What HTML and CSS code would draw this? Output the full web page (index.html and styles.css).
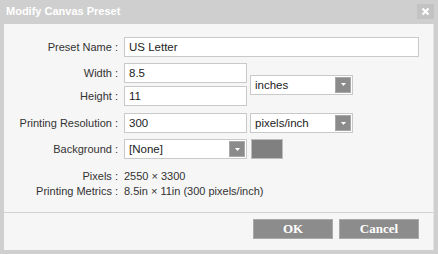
FILE: index.html
```html
<!DOCTYPE html>
<html>
<head>
<meta charset="utf-8">
<link rel="stylesheet" href="styles.css">
</head>
<body>
<div class="dialog">
  <div class="titlebar">
    <span class="title">Modify Canvas Preset</span>
    <span class="close"><svg width="9" height="9" viewBox="0 0 9 9"><path d="M1.5 1.5 L7.5 7.5 M7.5 1.5 L1.5 7.5" stroke="#fff" stroke-width="2.2" fill="none"/></svg></span>
  </div>
  <div class="panel">
    <div class="form">
      <label class="lbl r1">Preset Name :</label>
      <div class="input wide r1">US Letter</div>

      <label class="lbl r2">Width :</label>
      <div class="input c2 r2">8.5</div>

      <label class="lbl r3">Height :</label>
      <div class="input c2 r3">11</div>

      <div class="select units">inches<span class="dd"><svg width="5" height="3" viewBox="0 0 5 3"><path d="M0 0 H5 L2.5 3 Z" fill="#fff"/></svg></span></div>

      <label class="lbl r4">Printing Resolution :</label>
      <div class="input c2 r4">300</div>
      <div class="select c3 r4">pixels/inch<span class="dd"><svg width="5" height="3" viewBox="0 0 5 3"><path d="M0 0 H5 L2.5 3 Z" fill="#fff"/></svg></span></div>

      <label class="lbl r5">Background :</label>
      <div class="select bgsel c2 r5">[None]<span class="dd"><svg width="5" height="3" viewBox="0 0 5 3"><path d="M0 0 H5 L2.5 3 Z" fill="#fff"/></svg></span></div>
      <div class="swatch c3 r5"></div>
    </div>
    <div class="info">
      <span class="ilbl">Pixels :</span><span class="ival">2550 × 3300</span>
      <span class="ilbl">Printing Metrics :</span><span class="ival">8.5in × 11in (300 pixels/inch)</span>
    </div>
    <div class="footer">
      <button class="btn">OK</button>
      <button class="btn">Cancel</button>
    </div>
  </div>
</div>
</body>
</html>
```
FILE: styles.css
```css
html, body {
  margin: 0;
  padding: 0;
  background: #cfcfcf;
}
body {
  width: 438px;
  height: 254px;
  overflow: hidden;
  font-family: "Liberation Sans", Arial, sans-serif;
  font-size: 11px;
  color: #333;
}
.dialog {
  display: flex;
  flex-direction: column;
  height: 254px;
}
.titlebar {
  height: 24px;
  display: flex;
  justify-content: space-between;
  align-items: flex-start;
  padding: 0 4px 0 6px;
}
.title {
  color: #fff;
  font-weight: bold;
  font-size: 11px;
  line-height: 23px;
}
.close {
  margin-top: 4px;
  width: 17px;
  height: 15px;
  background: #c3c3c3;
  display: flex;
  align-items: center;
  justify-content: center;
}
.panel {
  margin: 0 4px;
  height: 226px;
  background: #f6f6f6;
  display: flex;
  flex-direction: column;
  box-sizing: border-box;
  border-right: 1px solid #e4e4e4;
}
.form {
  display: grid;
  grid-template-columns: 120px 126px 1fr;
  grid-template-rows: 20px 6px 20px 3px 20px 7px 20px 6px 20px;
  padding: 13px 14px 0 0;
}
.lbl {
  grid-column: 1;
  text-align: right;
  padding-right: 6px;
  align-self: center;
  color: #333;
  line-height: 14px;
}
.r1 { grid-row: 1; }
.r2 { grid-row: 3; }
.r3 { grid-row: 5; }
.r4 { grid-row: 7; }
.r5 { grid-row: 9; }
.c2 { grid-column: 2; }
.c3 { grid-column: 3; }
.input {
  box-sizing: border-box;
  height: 20px;
  width: 123px;
  background: #fff;
  border: 1px solid #c9c9c9;
  padding: 0 4px;
  line-height: 18px;
  color: #222;
  font-size: 11.5px;
}
.input.wide {
  grid-column: 2 / 4;
  width: auto;
}
.select {
  box-sizing: border-box;
  height: 20px;
  width: 103px;
  background: #fff;
  border: 1px solid #c9c9c9;
  padding: 0 0 0 4px;
  line-height: 18px;
  color: #222;
  font-size: 11.5px;
  display: flex;
  justify-content: space-between;
  align-items: center;
}
.select.units {
  grid-column: 3;
  grid-row: 3 / 6;
  align-self: center;
}
.select.bgsel {
  width: 123px;
}
.dd {
  box-sizing: border-box;
  width: 16px;
  height: 16px;
  margin-right: 1px;
  background: #8b8b8b;
  border: 1px solid #a8a8a8;
  display: flex;
  align-items: center;
  justify-content: center;
}
.swatch {
  box-sizing: border-box;
  width: 32px;
  height: 20px;
  margin-left: 1px;
  background: #808080;
  border: 1px solid #bdbdbd;
}
.info {
  display: grid;
  grid-template-columns: 120px 1fr;
  margin-top: 10px;
  line-height: 15px;
  color: #333;
}
.ilbl {
  text-align: right;
  padding-right: 6px;
}
.footer {
  margin-top: 13px;
  border-top: 1px solid #d2d2d2;
  display: flex;
  justify-content: flex-end;
  gap: 6px;
  padding: 6px 14px 0 0;
}
.btn {
  box-sizing: border-box;
  width: 80px;
  height: 20px;
  margin: 0;
  padding: 0;
  background: #8c8c8c;
  border: 1px solid #a9a9a9;
  color: #fff;
  font-family: "Liberation Serif", "Times New Roman", serif;
  font-weight: bold;
  font-size: 13px;
  line-height: 18px;
}
```
